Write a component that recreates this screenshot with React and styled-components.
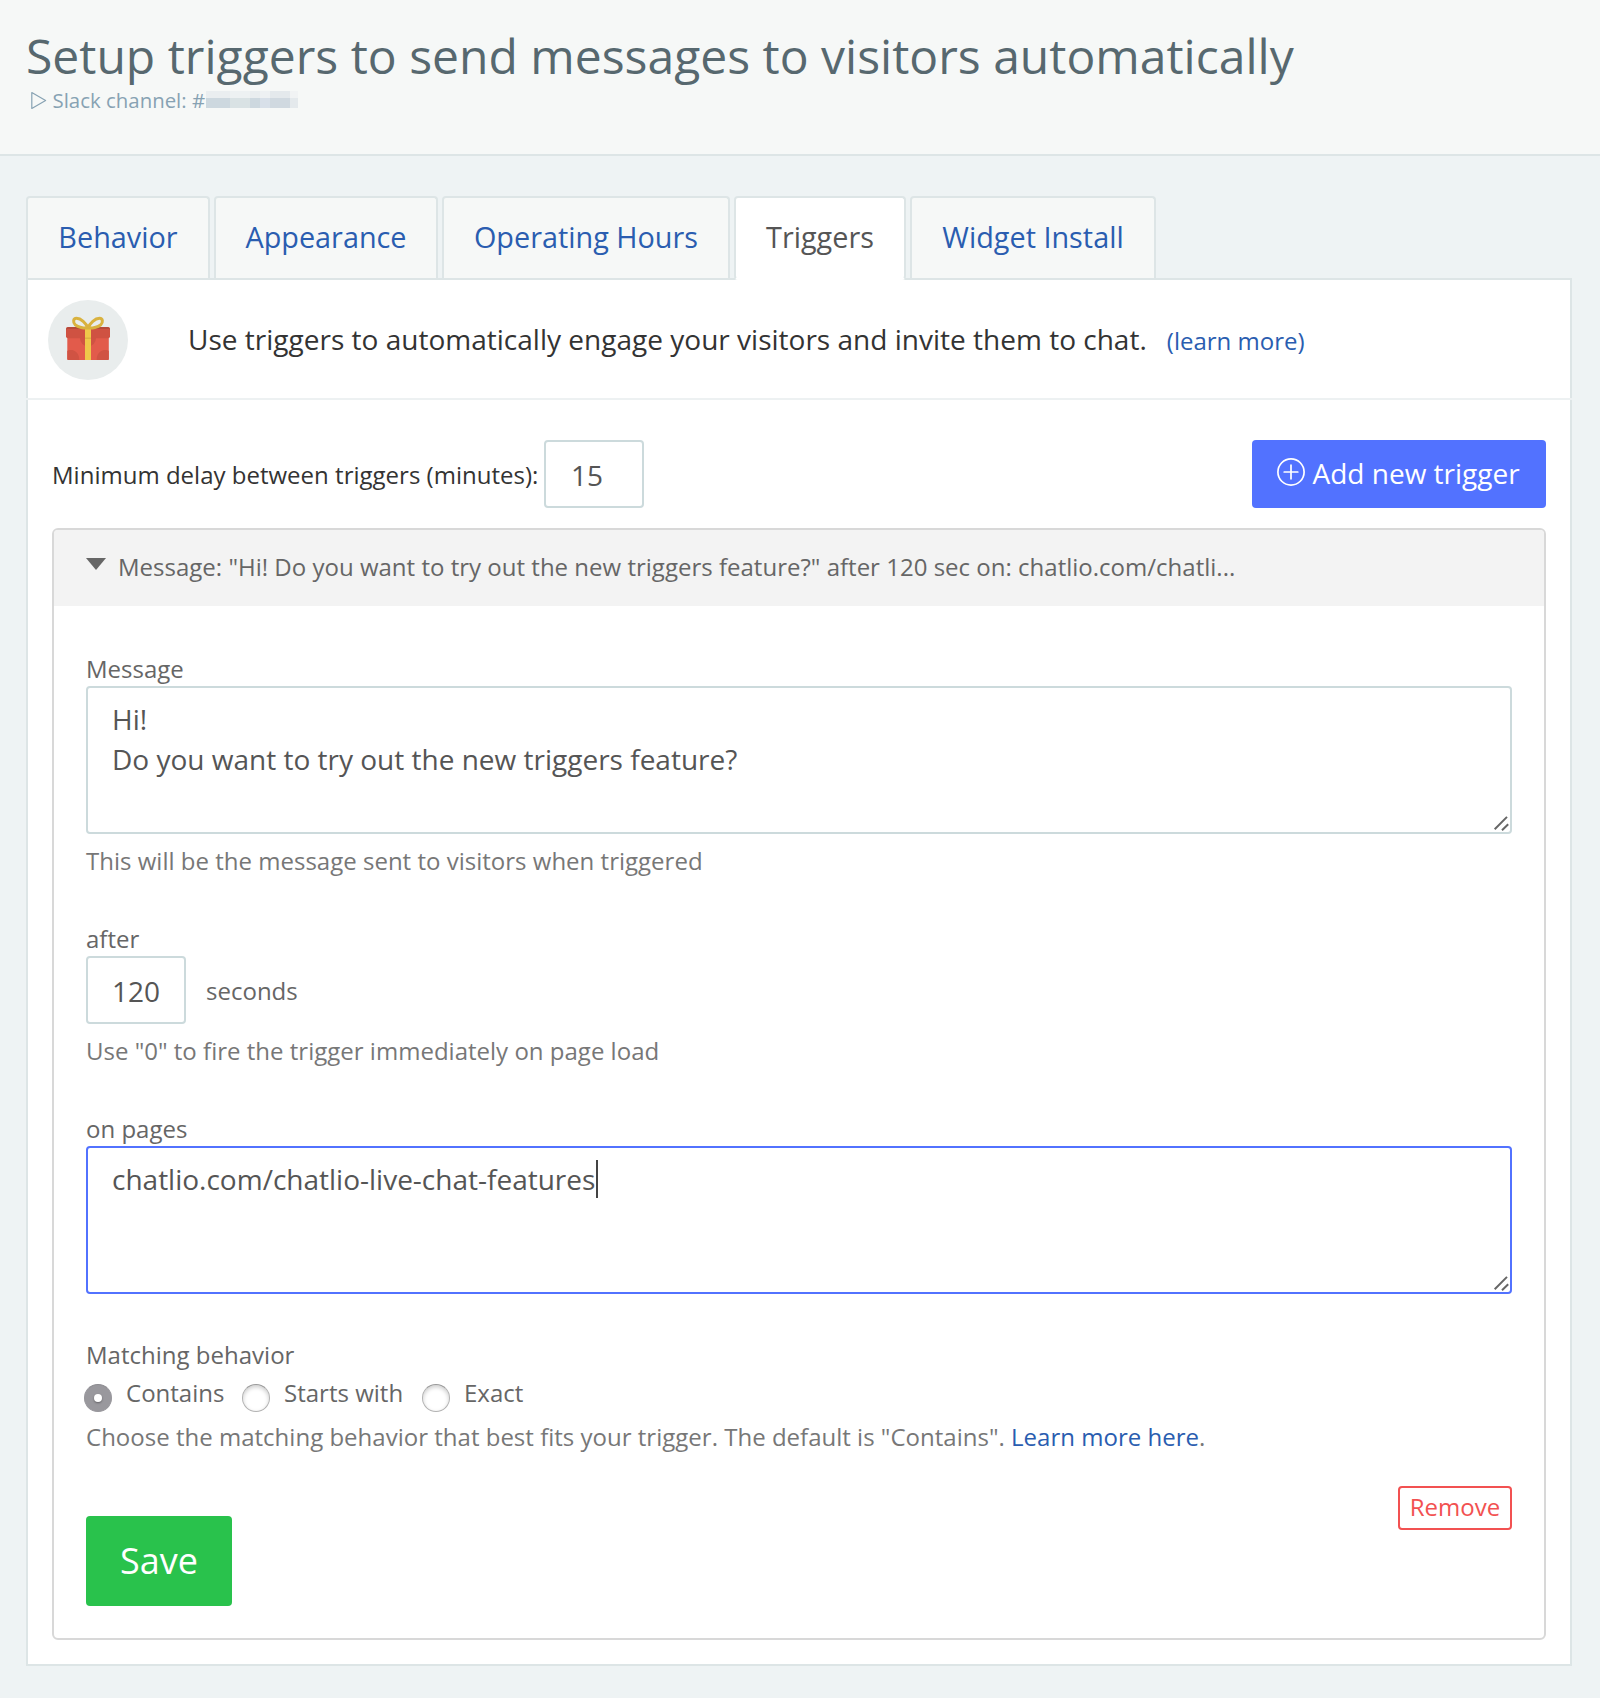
import React from "react";
import styled, { createGlobalStyle } from "styled-components";

const GlobalStyle = createGlobalStyle`
  *, *::before, *::after { box-sizing: border-box; }
  body {
    margin: 0;
    background: #eef3f4;
    font-family: "Open Sans", "Noto Sans", sans-serif;
    font-size: 24px;
    line-height: 33px;
    letter-spacing: 0.01px;
    color: #333;
  }
  a { color: #2a5db0; text-decoration: none; }
`;

const Page = styled.div`
  min-height: 1698px;
  background: #eef3f4;
`;

const Header = styled.header`
  height: 156px;
  padding: 23px 26px 0;
  background: #f6f8f7;
  border-bottom: 2px solid #dde5e6;
`;

const Title = styled.h1`
  margin: 0;
  font-size: 48px;
  line-height: 65px;
  font-weight: 400;
  color: #57686f;
  white-space: nowrap;
`;

const Channel = styled.div`
  display: flex;
  margin-top: -1px;
  padding-left: 4px;
  font-size: 20.4px;
  line-height: 27px;
  color: #87a2b3;
  white-space: nowrap;
`;

const PlayIcon = styled.svg`
  width: 18px;
  height: 20px;
  margin: 3px 4.5px 0 0;
`;

const Redacted = styled.svg`
  width: 92px;
  height: 17px;
  margin: 4px 0 0 1px;
`;

const Content = styled.main`
  padding: 40px 28px 32px 26px;
`;

const Tabs = styled.nav`
  display: flex;
  gap: 4px;
`;

const Tab = styled.a`
  width: ${(p) => p.$width}px;
  height: ${(p) => (p.$active ? 84 : 82)}px;
  margin-bottom: ${(p) => (p.$active ? -2 : 0)}px;
  padding-top: 19px;
  border: 2px solid #dde5e6;
  border-bottom: ${(p) => (p.$active ? "2px solid #fff" : "0")};
  border-radius: ${(p) => (p.$active ? "4px" : "4px 4px 0 0")};
  background: ${(p) => (p.$active ? "#fff" : "#f6f8f7")};
  color: ${(p) => (p.$active ? "#555" : "#2a5db0")};
  position: relative;
  z-index: ${(p) => (p.$active ? 1 : 0)};
  font-size: 28.8px;
  line-height: 40px;
  text-align: center;
  white-space: nowrap;
`;

const Panel = styled.section`
  border: 2px solid #dde5e6;
  background: #fff;
  padding-bottom: 24px;
`;

const Intro = styled.div`
  display: flex;
  height: 120px;
  margin: 0 -2px;
  padding: 20px 22px 0;
  border-bottom: 2px solid #edf1f2;
`;

const GiftIcon = styled.svg`
  width: 80px;
  height: 80px;
  margin-right: 60px;
`;

const IntroText = styled.p`
  margin: 19px 0 0;
  font-size: 28px;
  line-height: 40px;
  white-space: nowrap;
`;

const LearnMore = styled.a`
  margin-left: 20px;
  font-size: 24px;
`;

const Toolbar = styled.div`
  display: flex;
  align-items: flex-start;
  padding: 40px 24px 0;
`;

const DelayLabel = styled.label`
  width: 492px;
  padding-top: 18px;
  white-space: nowrap;
`;

const NumberField = styled.div`
  width: 100px;
  height: 68px;
  padding: 13px 0 0 ${(p) => p.$inset || 24}px;
  border: 2px solid #ccdadc;
  border-radius: 4px;
  background: #fff;
  font-size: 28px;
  line-height: 40px;
  color: #555;
`;

const AddButton = styled.button`
  display: flex;
  width: 294px;
  height: 68px;
  margin-left: auto;
  padding: 13px 0 0 25px;
  border: 0;
  border-radius: 4px;
  background: #5272ff;
  color: #fff;
  font: 400 28px/40px "Open Sans", sans-serif;
  white-space: nowrap;
`;

const PlusIcon = styled.svg`
  width: 28px;
  height: 28px;
  margin: 5px 7.5px 0 0;
`;

const Card = styled.article`
  margin: 20px 24px 0;
  border: 2px solid #d8d8d8;
  border-radius: 6px;
  overflow: hidden;
`;

const CardHeader = styled.div`
  display: flex;
  height: 76px;
  padding: 20px 32px 0;
  background: #f3f3f3;
  color: #666;
  white-space: nowrap;
`;

const Disclosure = styled.svg`
  width: 20px;
  height: 12px;
  margin: 8px 12px 0 0;
`;

const CardBody = styled.div`
  padding: 46px 32px 32px;
  color: #666;
`;

const Field = styled.div`
  margin-bottom: ${(p) => p.$gap}px;
`;

const Label = styled.div`
  height: ${(p) => p.$height || 34}px;
`;

const Help = styled.div`
  margin-top: ${(p) => p.$top || 10}px;
  color: #777;
  white-space: nowrap;
`;

const TextArea = styled.div`
  position: relative;
  height: 148px;
  padding: 11px 24px;
  border: 2px solid ${(p) => (p.$focused ? "#5272ff" : "#ccdadc")};
  border-radius: 4px;
  background: #fff;
  font-size: 28px;
  line-height: 40px;
  letter-spacing: 0;
  color: #555;
  white-space: pre-line;
`;

const Caret = styled.span`
  display: inline-block;
  width: 2px;
  height: 38px;
  margin: -4px 0 -4px 1px;
  vertical-align: -4px;
  background: #444;
`;

const Grip = styled.svg`
  position: absolute;
  right: 0;
  bottom: 0;
  width: 18px;
  height: 18px;
`;

const InlineRow = styled.div`
  display: flex;
`;

const Unit = styled.span`
  margin: 18px 0 0 20px;
`;

const RadioRow = styled.div`
  display: flex;
  height: 36px;
  margin-left: -2px;
`;

const RadioOption = styled.label`
  display: flex;
  width: ${(p) => p.$width}px;
  white-space: nowrap;
`;

const Radio = styled.span`
  display: flex;
  align-items: center;
  justify-content: center;
  flex: none;
  width: 28px;
  height: 28px;
  margin: 8px 14px 0 0;
  border-radius: 50%;
  border: 1px solid ${(p) => (p.$checked ? "#98979c" : "#b2b2b2")};
  border-top-color: ${(p) => (p.$checked ? "#8d8c91" : "#999")};
  background: ${(p) => (p.$checked ? "#99989d" : "#fff")};
  box-shadow: ${(p) => (p.$checked ? "none" : "inset 0 2px 4px rgba(0, 0, 0, 0.2)")};
`;

const RadioDot = styled.span`
  width: 8px;
  height: 8px;
  border-radius: 50%;
  background: #fff;
  box-shadow: 0 1px 2px rgba(0, 0, 0, 0.35);
`;

const Footer = styled.div`
  display: flex;
  justify-content: space-between;
  align-items: flex-start;
  margin-top: 33px;
`;

const SaveButton = styled.button`
  width: 146px;
  height: 90px;
  margin-top: 30px;
  padding: 0 0 2px;
  border: 0;
  border-radius: 4px;
  background: #29c24c;
  color: #fff;
  font: 400 36px/49px "Open Sans", sans-serif;
`;

const RemoveButton = styled.button`
  width: 114px;
  height: 44px;
  padding: 0 0 4px;
  border: 2px solid #f25151;
  border-radius: 4px;
  background: #fff;
  color: #f25151;
  font: 400 24px/33px "Open Sans", sans-serif;
`;

const tabs = [
  { name: "Behavior", width: 184 },
  { name: "Appearance", width: 224 },
  { name: "Operating Hours", width: 288 },
  { name: "Triggers", width: 172, active: true },
  { name: "Widget Install", width: 246 },
];

const mosaic = [
  [0, 24, "#eaeef0", "#cdd8df"],
  [24, 20, "#edf1f2", "#d9e2e4"],
  [44, 10, "#e9edef", "#cdd8df"],
  [54, 10, "#eef1f3", "#d8e0e9"],
  [64, 20, "#e4e9ec", "#d0d9e0"],
  [84, 8, "#f1f3f4", "#e4e9ec"],
];

const matching = [
  { name: "Contains", width: 158, checked: true },
  { name: "Starts with", width: 180 },
  { name: "Exact", width: 120 },
];

function Gift() {
  return (
    <GiftIcon viewBox="0 0 80 80">
      <circle cx="40" cy="40" r="40" fill="#e9eded" />
      <rect x="19.300" y="36" width="41.500" height="24" rx="1" fill="#e25b4b" />
      <path
        d="M19.300 51C22 49 31.300 49.500 31.300 60H20.300a1 1 0 0 1-1-1zM60.800 51C58 49 48.700 49.500 48.700 60H59.800a1 1 0 0 0 1-1zM32 38h16a8 8.500 0 0 1-16 0z"
        fill="#d05343"
      />
      <rect x="18" y="27" width="44" height="11.300" rx="2" fill="#cf5242" />
      <path d="M18 30a3 3 0 0 1 3-3h38a3 3 0 0 1 3 3l-1-1H19z" fill="#b54a3b" />
      <rect x="37" y="29" width="6" height="31" fill="#efc84a" />
      <rect x="37" y="37.500" width="6" height="1.500" fill="#dcb440" />
      <path
        d="M40 28C38 23 33 18.300 28.500 18.300C25 18.300 24.800 22.500 27.300 24.800C30 27.300 36 28.500 40 28C44 28.500 50 27.300 52.700 24.800C55.200 22.500 55 18.300 51.500 18.300C47 18.300 42 23 40 28z"
        fill="none"
        stroke="#d9b23f"
        strokeWidth="3"
        strokeLinejoin="round"
      />
    </GiftIcon>
  );
}

function ResizeGrip() {
  return (
    <Grip viewBox="0 0 18 18" fill="none" stroke="#666" strokeWidth="2">
      <path d="M2.700 15.200L15 2.900M10 16.300L16.200 10.200" />
    </Grip>
  );
}

export default function App() {
  return (
    <Page>
      <GlobalStyle />
      <Header>
        <Title>Setup triggers to send messages to visitors automatically</Title>
        <Channel>
          <PlayIcon viewBox="0 0 18 20" fill="none" stroke="#87a2b3" strokeWidth="1.200" strokeLinejoin="round">
            <path d="M1.800 2.600L15.600 10.500L1.800 18.400z" />
          </PlayIcon>
          Slack channel: #
          <Redacted viewBox="0 0 92 17" shapeRendering="crispEdges">
            {mosaic.map(([x, w, top, bottom]) => (
              <g key={x}>
                <rect x={x} y="0" width={w} height="7" fill={top} />
                <rect x={x} y="7" width={w} height="10" fill={bottom} />
              </g>
            ))}
          </Redacted>
        </Channel>
      </Header>
      <Content>
        <Tabs>
          {tabs.map((t) => (
            <Tab key={t.name} $width={t.width} $active={t.active}>
              {t.name}
            </Tab>
          ))}
        </Tabs>
        <Panel>
          <Intro>
            <Gift />
            <IntroText>
              Use triggers to automatically engage your visitors and invite them to chat.
              <LearnMore>(learn more)</LearnMore>
            </IntroText>
          </Intro>
          <Toolbar>
            <DelayLabel>Minimum delay between triggers (minutes):</DelayLabel>
            <NumberField $inset={25}>15</NumberField>
            <AddButton>
              <PlusIcon viewBox="0 0 28 28" fill="none" stroke="#fff" strokeWidth="1.700">
                <circle cx="14" cy="14" r="13.100" />
                <path d="M14 7.200V20.800M7.200 14H20.800" strokeLinecap="round" />
              </PlusIcon>
              Add new trigger
            </AddButton>
          </Toolbar>
          <Card>
            <CardHeader>
              <Disclosure viewBox="0 0 20 12">
                <path d="M0 0H20L10 12z" fill="#666" />
              </Disclosure>
              Message: "Hi! Do you want to try out the new triggers feature?" after 120 sec on: chatlio.com/chatli...
            </CardHeader>
            <CardBody>
              <Field $gap={45}>
                <Label>Message</Label>
                <TextArea>
                  {"Hi!\nDo you want to try out the new triggers feature?"}
                  <ResizeGrip />
                </TextArea>
                <Help>This will be the message sent to visitors when triggered</Help>
              </Field>
              <Field $gap={45}>
                <Label>after</Label>
                <InlineRow>
                  <NumberField>120</NumberField>
                  <Unit>seconds</Unit>
                </InlineRow>
                <Help>Use "0" to fire the trigger immediately on page load</Help>
              </Field>
              <Field $gap={44}>
                <Label>on pages</Label>
                <TextArea $focused>
                  chatlio.com/chatlio-live-chat-features
                  <Caret />
                  <ResizeGrip />
                </TextArea>
              </Field>
              <Field $gap={0}>
                <Label $height={38}>Matching behavior</Label>
                <RadioRow>
                  {matching.map((m) => (
                    <RadioOption key={m.name} $width={m.width}>
                      <Radio $checked={m.checked}>{m.checked && <RadioDot />}</Radio>
                      {m.name}
                    </RadioOption>
                  ))}
                </RadioRow>
                <Help $top={8}>
                  Choose the matching behavior that best fits your trigger. The default is "Contains". <a>Learn more here</a>.
                </Help>
              </Field>
              <Footer>
                <SaveButton>Save</SaveButton>
                <RemoveButton>Remove</RemoveButton>
              </Footer>
            </CardBody>
          </Card>
        </Panel>
      </Content>
    </Page>
  );
}
